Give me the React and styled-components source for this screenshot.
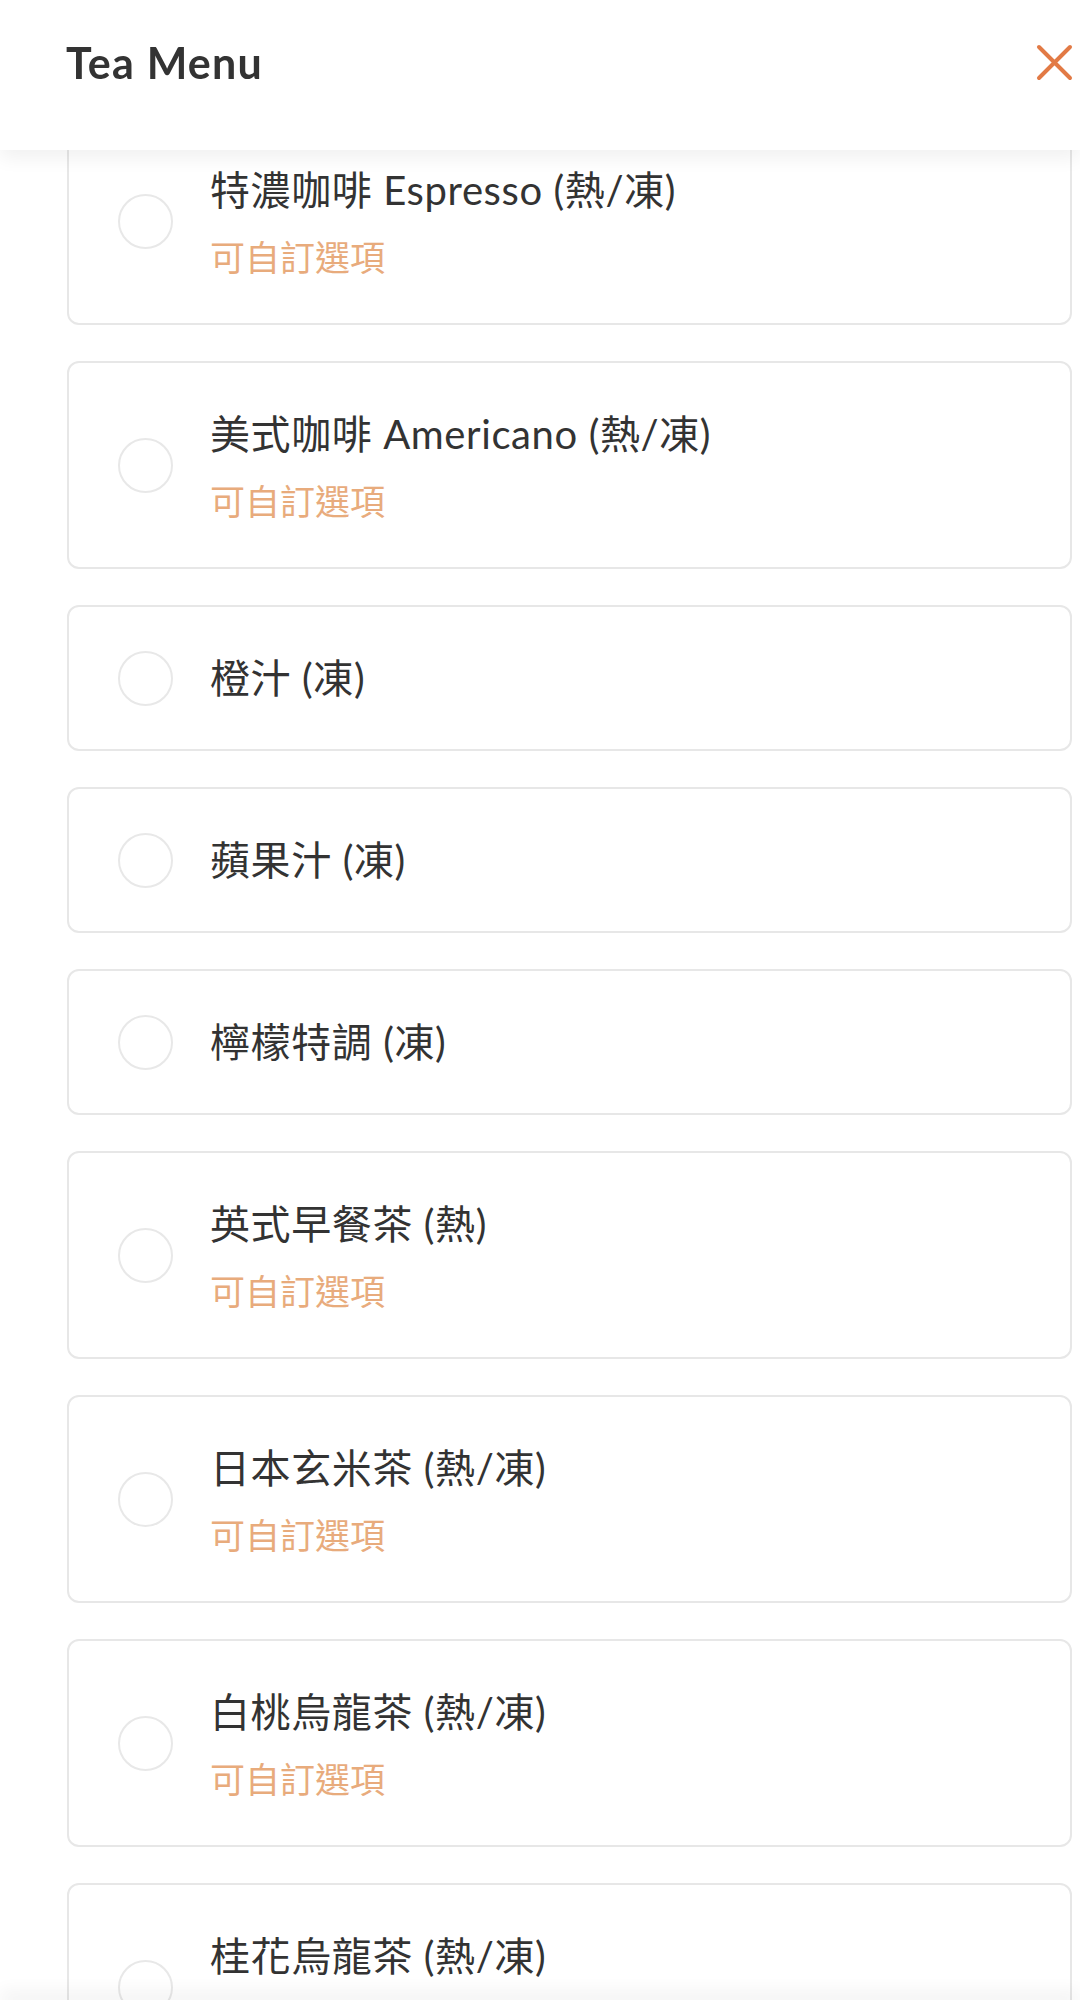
import React from "react";
import styled, { createGlobalStyle } from "styled-components";

// Css
const GlobalStyle = createGlobalStyle`
  body {
    margin: 0;
    background: #ffffff;
    font-family: "Lato", "Noto Sans CJK TC", sans-serif;
  }
`;

const Header = styled.header`
  position: fixed;
  top: 0;
  left: 0;
  right: 0;
  height: 150px;
  background: #ffffff;
  box-shadow: 0 8px 18px rgba(0, 0, 0, 0.06);
  z-index: 10;
`;

const Bar = styled.div`
  height: 124px;
  padding: 0 7px 0 66px;
  display: flex;
  align-items: center;
  justify-content: space-between;
`;

const Title = styled.h1`
  margin: 0;
  font-family: "Lato", sans-serif;
  font-weight: 700;
  font-size: 43px;
  letter-spacing: 1.2px;
  color: #333333;
`;

const CloseButton = styled.button`
  border: none;
  background: none;
  padding: 0;
  width: 37px;
  height: 37px;
  display: flex;
  cursor: pointer;
`;

const Page = styled.main`
  padding: 117px 8px 80px 67px;
`;

const List = styled.div`
  display: flex;
  flex-direction: column;
  gap: 36px;
`;

const Card = styled.label`
  display: flex;
  align-items: center;
  border: 2px solid #e7e7e7;
  border-radius: 12px;
  padding: 43px 0;
  cursor: pointer;
`;

const Radio = styled.span`
  flex-shrink: 0;
  width: 51px;
  height: 51px;
  border: 2px solid #e8e8e8;
  border-radius: 50%;
  margin-left: 49px;
  margin-right: 37px;
`;

const Texts = styled.div`
  display: flex;
  flex-direction: column;
`;

const Name = styled.div`
  font-family: "Lato", "Noto Sans CJK TC", sans-serif;
  font-size: 40px;
  line-height: 56px;
  letter-spacing: 0.6px;
  color: #333333;
`;

const Note = styled.div`
  margin-top: 14px;
  font-family: "Noto Sans CJK TC", sans-serif;
  font-size: 35px;
  line-height: 48px;
  color: #e8ab7c;
`;

const Footer = styled.footer`
  position: fixed;
  left: 0;
  right: 0;
  bottom: 0;
  height: 14px;
  background: #ffffff;
  box-shadow: 0 -8px 18px rgba(0, 0, 0, 0.06);
`;
// End Css

const items = [
  { name: "特濃咖啡 Espresso (熱/凍)", custom: true },
  { name: "美式咖啡 Americano (熱/凍)", custom: true },
  { name: "橙汁 (凍)" },
  { name: "蘋果汁 (凍)" },
  { name: "檸檬特調 (凍)" },
  { name: "英式早餐茶 (熱)", custom: true },
  { name: "日本玄米茶 (熱/凍)", custom: true },
  { name: "白桃烏龍茶 (熱/凍)", custom: true },
  { name: "桂花烏龍茶 (熱/凍)", custom: true },
];

const App = () => {
  return (
    <>
      <GlobalStyle />
      <Header>
        <Bar>
          <Title>Tea Menu</Title>
          <CloseButton aria-label="close">
            <svg width="37" height="37" viewBox="0 0 37 37">
              <path
                d="M3 3 L34 34 M34 3 L3 34"
                stroke="#e27a45"
                strokeWidth="4"
                strokeLinecap="round"
              />
            </svg>
          </CloseButton>
        </Bar>
      </Header>
      <Page>
        <List>
          {items.map((item) => (
            <Card key={item.name}>
              <Radio />
              <Texts>
                <Name>{item.name}</Name>
                {item.custom && <Note>可自訂選項</Note>}
              </Texts>
            </Card>
          ))}
        </List>
      </Page>
      <Footer />
    </>
  );
};

export default App;
